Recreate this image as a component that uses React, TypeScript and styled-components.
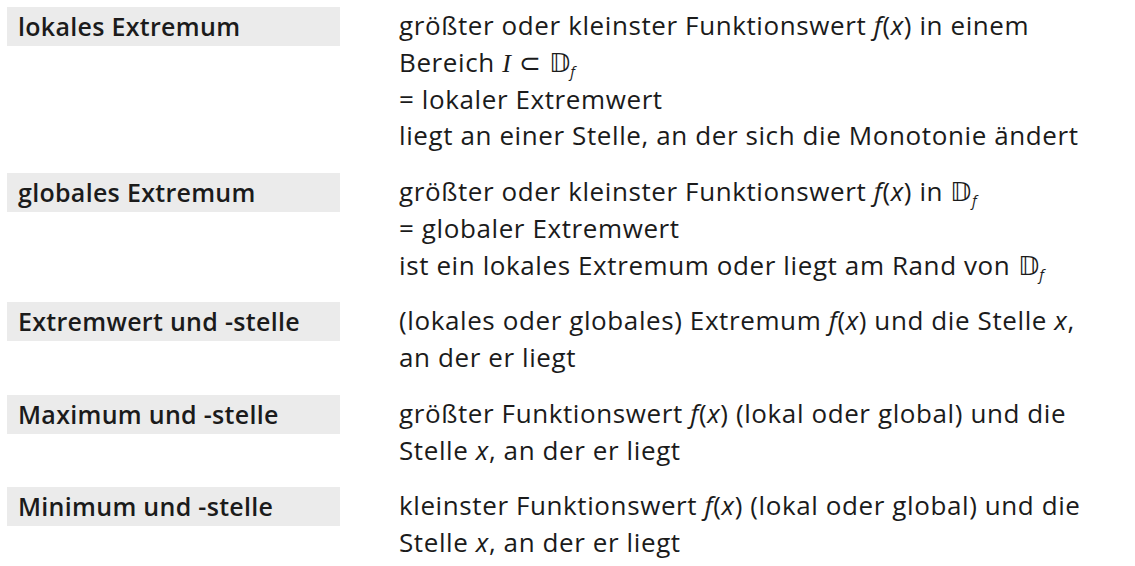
import React from "react";
import styled, { createGlobalStyle } from "styled-components";

const Global = createGlobalStyle`
  html, body { margin: 0; padding: 0; background: #ffffff; }
  body { color: #1b1b1b; font-family: "Open Sans", "Liberation Sans", sans-serif; }
`;

const Table = styled.div`
  display: flex;
  flex-direction: column;
  gap: 19px;
  padding: 7px;
`;

const Row = styled.div`
  display: grid;
  grid-template-columns: 333px 1fr;
  column-gap: 59px;
  align-items: start;
`;

const Term = styled.div`
  background: #ebebeb;
  height: 39px;
  line-height: 39px;
  padding-left: 11px;
  font-family: "Open Sans", sans-serif;
  font-weight: 600;
  font-size: 25px;
  letter-spacing: 0.3px;
  white-space: nowrap;
`;

const Desc = styled.div`
  font-size: 26px;
  line-height: 36.75px;
  letter-spacing: 0.6px;
  white-space: nowrap;
`;

const It = styled.i`
  font-style: italic;
`;

const SerifIt = styled.i`
  font-family: "Liberation Serif", serif;
  font-style: italic;
  line-height: 0;
`;

const DS = styled.span`
  font-family: "DejaVu Sans", sans-serif;
  font-weight: 300;
  line-height: 0;
`;

const Sub = styled.sub`
  font-size: 15px;
  font-style: italic;
  vertical-align: -5px;
  line-height: 0;
`;

const Df = () => (
  <>
    <DS>𝔻</DS>
    <Sub>f</Sub>
  </>
);

const Fx = () => <It>f</It>;

const rows: { term: string; desc: React.ReactNode }[] = [
  {
    term: "lokales Extremum",
    desc: (
      <>
        größter oder kleinster Funktionswert <Fx />(<It>x</It>) in einem
        <br />
        Bereich <SerifIt>I</SerifIt> ⊂ <Df />
        <br />= lokaler Extremwert
        <br />
        liegt an einer Stelle, an der sich die Monotonie ändert
      </>
    ),
  },
  {
    term: "globales Extremum",
    desc: (
      <>
        größter oder kleinster Funktionswert <Fx />(<It>x</It>) in <Df />
        <br />= globaler Extremwert
        <br />
        ist ein lokales Extremum oder liegt am Rand von <Df />
      </>
    ),
  },
  {
    term: "Extremwert und -stelle",
    desc: (
      <>
        (lokales oder globales) Extremum <Fx />(<It>x</It>) und die Stelle <It>x</It>,
        <br />
        an der er liegt
      </>
    ),
  },
  {
    term: "Maximum und -stelle",
    desc: (
      <>
        größter Funktionswert <Fx />(<It>x</It>) (lokal oder global) und die
        <br />
        Stelle <It>x</It>, an der er liegt
      </>
    ),
  },
  {
    term: "Minimum und -stelle",
    desc: (
      <>
        kleinster Funktionswert <Fx />(<It>x</It>) (lokal oder global) und die
        <br />
        Stelle <It>x</It>, an der er liegt
      </>
    ),
  },
];

export default function App() {
  return (
    <>
      <Global />
      <Table>
        {rows.map((r) => (
          <Row key={r.term}>
            <Term>{r.term}</Term>
            <Desc>{r.desc}</Desc>
          </Row>
        ))}
      </Table>
    </>
  );
}
